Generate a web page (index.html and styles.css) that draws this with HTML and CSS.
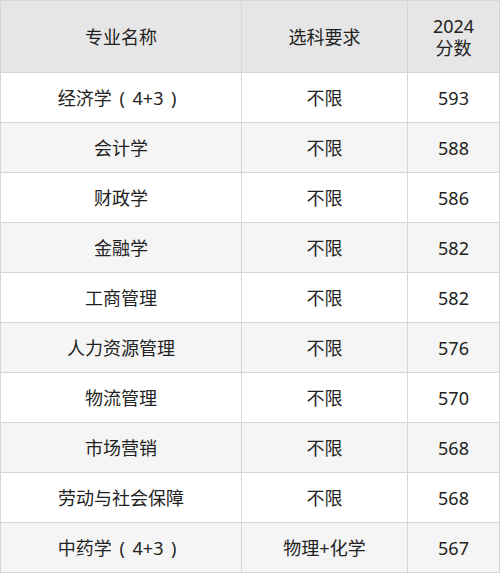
FILE: index.html
```html
<!DOCTYPE html>
<html lang="zh-CN">
<head>
<meta charset="utf-8">
<link rel="stylesheet" href="styles.css">
</head>
<body>
<table class="score-table">
  <colgroup>
    <col class="c1"><col class="c2"><col class="c3">
  </colgroup>
  <thead>
    <tr><th>专业名称</th><th>选科要求</th><th>2024<br>分数</th></tr>
  </thead>
  <tbody>
    <tr><td>经济学<span class="paren">(</span>4+3<span class="paren">)</span></td><td>不限</td><td>593</td></tr>
    <tr><td>会计学</td><td>不限</td><td>588</td></tr>
    <tr><td>财政学</td><td>不限</td><td>586</td></tr>
    <tr><td>金融学</td><td>不限</td><td>582</td></tr>
    <tr><td>工商管理</td><td>不限</td><td>582</td></tr>
    <tr><td>人力资源管理</td><td>不限</td><td>576</td></tr>
    <tr><td>物流管理</td><td>不限</td><td>570</td></tr>
    <tr><td>市场营销</td><td>不限</td><td>568</td></tr>
    <tr><td>劳动与社会保障</td><td>不限</td><td>568</td></tr>
    <tr><td>中药学<span class="paren">(</span>4+3<span class="paren">)</span></td><td>物理+化学</td><td>567</td></tr>
  </tbody>
</table>
</body>
</html>
```
FILE: styles.css
```css
html, body {
  margin: 0;
  padding: 0;
  background: #ffffff;
}
.score-table {
  border-collapse: collapse;
  table-layout: fixed;
  width: 499px;
  font-family: "Noto Sans", "Noto Sans CJK SC", sans-serif;
  font-size: 18px;
  color: #222222;
}
.c1 { width: 241px; }
.c2 { width: 166px; }
.c3 { width: 92px; }
.score-table th,
.score-table td {
  border: 1px solid #d6d6d6;
  text-align: center;
  vertical-align: middle;
  padding: 0;
  font-weight: normal;
}
.score-table th {
  height: 71px;
  background: #e6e6e6;
  line-height: 22px;
}
.score-table td {
  height: 49px;
  line-height: 24px;
}
.score-table tbody tr:nth-child(even) td {
  background: #f5f5f5;
}
.paren {
  display: inline-block;
  width: 1.15em;
  text-align: center;
}
```
